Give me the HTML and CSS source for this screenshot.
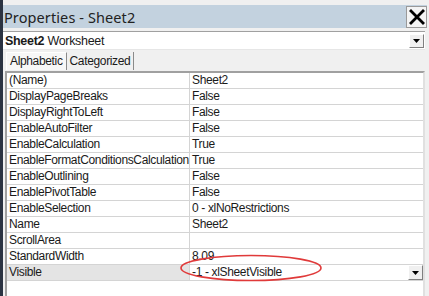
FILE: index.html
```html
<!DOCTYPE html>
<html>
<head>
<meta charset="utf-8">
<link rel="stylesheet" href="styles.css">
</head>
<body>
<div class="window">
  <div class="titlebar">
    <span class="title">Properties - Sheet2</span>
    <span class="close">
      <svg width="18" height="18" viewBox="0 0 18 18"><path d="M3 3 L15 15 M15 3 L3 15" stroke="#000" stroke-width="2.8" stroke-linecap="square"/></svg>
    </span>
  </div>
  <div class="combo">
    <span class="combo-text"><b>Sheet2</b> Worksheet</span>
    <span class="dd"><svg width="7" height="4" viewBox="0 0 7 4"><path d="M0 0 H7 L3.5 4 Z" fill="#000"/></svg></span>
  </div>
  <div class="tabs">
    <span class="tab active">Alphabetic</span>
    <span class="tab">Categorized</span>
  </div>
  <div class="grid">
    <div class="row"><span class="k">(Name)</span><span class="v">Sheet2</span></div>
    <div class="row"><span class="k">DisplayPageBreaks</span><span class="v">False</span></div>
    <div class="row"><span class="k">DisplayRightToLeft</span><span class="v">False</span></div>
    <div class="row"><span class="k">EnableAutoFilter</span><span class="v">False</span></div>
    <div class="row"><span class="k">EnableCalculation</span><span class="v">True</span></div>
    <div class="row"><span class="k">EnableFormatConditionsCalculation</span><span class="v">True</span></div>
    <div class="row"><span class="k">EnableOutlining</span><span class="v">False</span></div>
    <div class="row"><span class="k">EnablePivotTable</span><span class="v">False</span></div>
    <div class="row"><span class="k">EnableSelection</span><span class="v">0 - xlNoRestrictions</span></div>
    <div class="row"><span class="k">Name</span><span class="v">Sheet2</span></div>
    <div class="row"><span class="k">ScrollArea</span><span class="v"></span></div>
    <div class="row"><span class="k">StandardWidth</span><span class="v">8.09</span></div>
    <div class="row sel"><span class="k">Visible</span><span class="v">-1 - xlSheetVisible<span class="dd rowdd"><svg width="7" height="4" viewBox="0 0 7 4"><path d="M0 0 H7 L3.5 4 Z" fill="#000"/></svg></span></span></div>
    <div class="filler"></div>
  </div>
  <svg class="ellipse" width="150" height="32" viewBox="0 0 150 32"><ellipse cx="73" cy="16" rx="70" ry="12.5" fill="none" stroke="#e03a3a" stroke-width="1.6"/></svg>
</div>
</body>
</html>
```

FILE: styles.css
```css
html, body {
  margin: 0;
  padding: 0;
}
body {
  width: 429px;
  height: 296px;
  overflow: hidden;
  background: #f0f0f0;
  font-family: "Liberation Sans", Arial, sans-serif;
  color: #1a1a1a;
}
.window {
  position: relative;
  height: 296px;
  border-left: 3px solid #2b3342;
  padding-top: 5px;
  box-sizing: border-box;
  display: flex;
  flex-direction: column;
}
.titlebar {
  height: 23px;
  background: #c3d2df;
  display: flex;
  align-items: center;
  justify-content: space-between;
  padding-left: 1px;
  margin-right: 2px;
}
.title {
  font-family: "Noto Sans", sans-serif;
  font-size: 14.5px;
  color: #222;
  letter-spacing: 0.1px;
}
.close {
  width: 19px;
  height: 20px;
  background: #f4f4f4;
  border: 1px solid #9a9a9a;
  display: flex;
  align-items: center;
  justify-content: center;
}
.combo {
  margin: 3px 4px 0 0;
  height: 17px;
  background: #fff;
  border-top: 1px solid #a0a0a0;
  border-bottom: 1px solid #e6e6e6;
  display: flex;
  align-items: center;
  justify-content: space-between;
  font-size: 12.5px;
  letter-spacing: -0.3px;
}
.combo-text {
  padding-left: 2px;
}
.dd {
  width: 15px;
  height: 14px;
  background: #f0f0f0;
  border: 1px solid #fff;
  border-right-color: #808080;
  border-bottom-color: #808080;
  display: flex;
  align-items: center;
  justify-content: center;
  box-sizing: border-box;
  margin-right: 1px;
}
.tabs {
  display: flex;
  height: 18px;
  margin-top: 2px;
  padding-left: 3px;
  font-size: 12px;
  letter-spacing: -0.35px;
  align-items: stretch;
}
.tab {
  padding: 0 3px;
  border-right: 1px solid #8a8a8a;
  line-height: 18px;
}
.tab.active {
  background: #f7f7f7;
  border-left: 1px solid #fff;
  border-top: 1px solid #fff;
  line-height: 17px;
}
.grid {
  margin: 1px 4px 0 2px;
  flex: 1;
  background: #fff;
  border-top: 2px solid #a0a0a0;
  border-left: 2px solid #a0a0a0;
  border-right: 2px solid #e0e0e0;
  display: flex;
  flex-direction: column;
}
.row {
  display: grid;
  grid-template-columns: 183px 1fr;
  height: 16px;
  box-sizing: border-box;
  border-bottom: 1px solid #d4d4d4;
  font-size: 12px;
  letter-spacing: -0.35px;
  line-height: 15px;
}
.k {
  padding-left: 2px;
  border-right: 1px solid #d4d4d4;
  white-space: nowrap;
  overflow: hidden;
}
.v {
  padding-left: 2px;
  white-space: nowrap;
  display: flex;
  justify-content: space-between;
  align-items: center;
}
.row.sel .k {
  background: #e4e4e4;
}
.rowdd {
  height: 15px;
  margin-right: 0;
}
.filler {
  flex: 1;
}
.ellipse {
  position: absolute;
  left: 175px;
  top: 252px;
}
```
